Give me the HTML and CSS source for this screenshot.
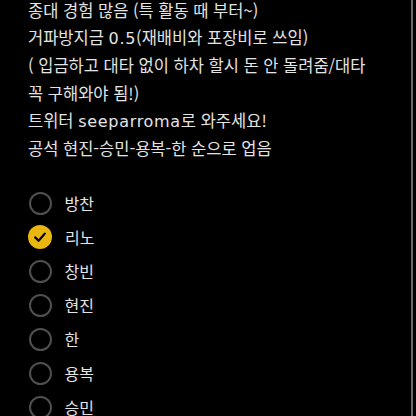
FILE: index.html
```html
<!DOCTYPE html>
<html lang="ko">
<head>
<meta charset="utf-8">
<link rel="stylesheet" href="styles.css">
</head>
<body>
<div class="screen">
  <div class="content">
    <div class="desc">
      <div class="line">종대 경험 많음 (특 활동 때 부터~)</div>
      <div class="line">거파방지금 <span class="en">0.5</span>(재배비와 포장비로 쓰임)</div>
      <div class="line">( 입금하고 대타 없이 하차 할시 돈 안 돌려줌/대타</div>
      <div class="line">꼭 구해와야 됨!)</div>
      <div class="line">트위터 <span class="en">seeparroma</span>로 와주세요!</div>
      <div class="line">공석 현진-승민-용복-한 순으로 업음</div>
    </div>
    <ul class="options">
      <li class="option"><span class="radio"></span><span class="label">방찬</span></li>
      <li class="option"><span class="radio checked"><svg viewBox="0 0 24 24" width="24" height="24"><path d="M7.2 12.4 L10.6 15.8 L16.8 8.6" fill="none" stroke="#000" stroke-width="2.2" stroke-linecap="round" stroke-linejoin="round"/></svg></span><span class="label">리노</span></li>
      <li class="option"><span class="radio"></span><span class="label">창빈</span></li>
      <li class="option"><span class="radio"></span><span class="label">현진</span></li>
      <li class="option"><span class="radio"></span><span class="label">한</span></li>
      <li class="option"><span class="radio"></span><span class="label">용복</span></li>
      <li class="option"><span class="radio"></span><span class="label">승민</span></li>
    </ul>
  </div>
  <div class="scrollbar"></div>
</div>
</body>
</html>
```
FILE: styles.css
```css
html, body {
  margin: 0;
  padding: 0;
  background: #000;
}
.screen {
  width: 416px;
  height: 416px;
  overflow: hidden;
  display: flex;
  background: #000;
  font-family: "Noto Sans CJK KR", "Noto Sans", sans-serif;
  color: #e4e4e4;
}
.content {
  flex: 1;
  padding-left: 28px;
  margin-top: -3px;
}
.desc {
  font-size: 16.5px;
  line-height: 27.2px;
}
.line {
  white-space: nowrap;
}
.en {
  font-family: "DejaVu Sans", sans-serif;
  font-size: 16px;
  letter-spacing: 0.7px;
}
.options {
  list-style: none;
  margin: 29px 0 0 0;
  padding: 0;
  display: flex;
  flex-direction: column;
  gap: 10px;
}
.option {
  display: flex;
  align-items: center;
  height: 24px;
}
.radio {
  box-sizing: border-box;
  width: 23px;
  height: 23px;
  margin-left: 0.5px;
  border-radius: 50%;
  border: 2px solid #4f4f4f;
  flex: none;
  display: flex;
  align-items: center;
  justify-content: center;
}
.radio.checked {
  width: 24px;
  height: 24px;
  margin-left: 0;
  border: none;
  background: #eab610;
}
.label {
  margin-left: 13px;
  font-size: 16px;
  color: #e4e4e4;
}
.scrollbar {
  width: 2px;
  margin-right: 3px;
  background: #6a6a6a;
  flex: none;
}
```
